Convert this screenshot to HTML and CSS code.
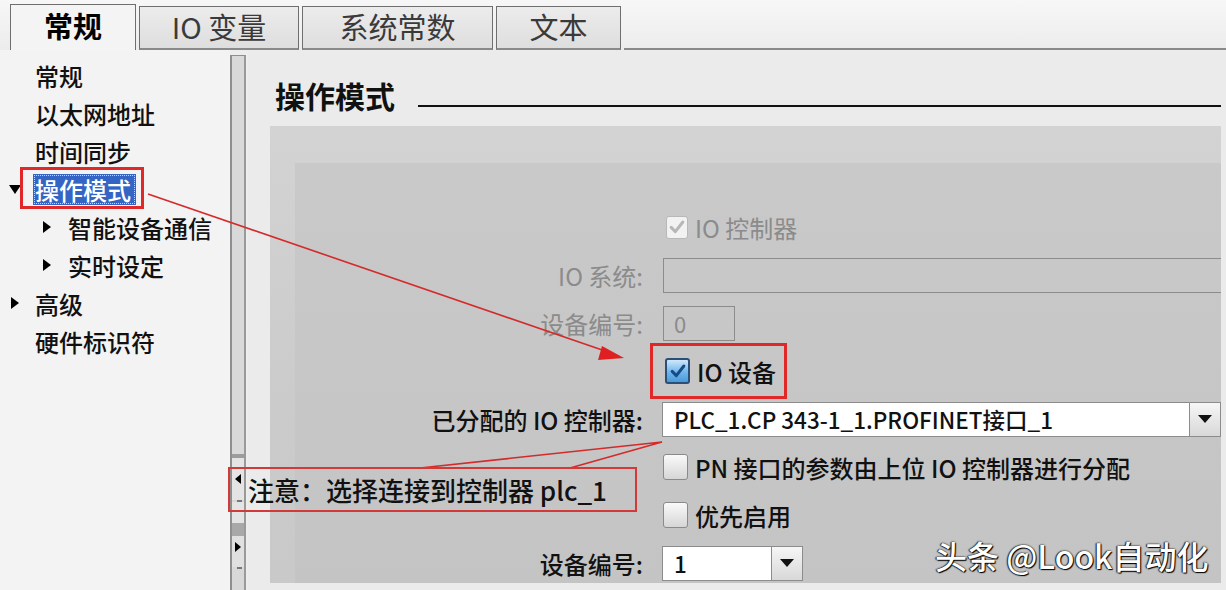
FILE: index.html
```html
<!DOCTYPE html>
<html lang="zh-CN">
<head>
<meta charset="utf-8">
<title>操作模式</title>
<link rel="stylesheet" href="styles.css">
</head>
<body>
<div class="app">
  <div class="tabs">
    <div class="tab active">常规</div>
    <div class="tab">IO 变量</div>
    <div class="tab">系统常数</div>
    <div class="tab">文本</div>
    <div class="tabfill"></div>
  </div>
  <div class="main">
    <nav class="nav">
      <div class="item">常规</div>
      <div class="item">以太网地址</div>
      <div class="item">时间同步</div>
      <div class="item"><span class="tw down"></span><span class="sel">操作模式</span></div>
      <div class="item sub"><span class="tw right"></span>智能设备通信</div>
      <div class="item sub"><span class="tw right"></span>实时设定</div>
      <div class="item"><span class="tw right"></span>高级</div>
      <div class="item">硬件标识符</div>
    </nav>
    <div class="scroll">
      <div class="track"></div>
      <div class="handle">
        <div class="hb"><span class="tri-l"></span></div>
        <div class="hline"></div>
        <div class="hgap"></div>
        <div class="hb dark"><span class="tri-r"></span></div>
        <div class="hline"></div>
      </div>
    </div>
    <section class="content">
      <div class="head">
        <h2>操作模式</h2>
        <div class="rule"></div>
      </div>
      <div class="panel">
        <div class="inner">
          <div class="row">
            <div class="lab"></div>
            <span class="cb dis"><svg viewBox="0 0 24 24"><path d="M5 12.5 L10 17.5 L19 6"/></svg></span>
            <span class="cbl dim">IO 控制器</span>
          </div>
          <div class="row">
            <div class="lab dim">IO 系统:</div>
            <div class="field"></div>
          </div>
          <div class="row">
            <div class="lab dim">设备编号:</div>
            <div class="num">0</div>
          </div>
          <div class="row">
            <div class="lab"></div>
            <span class="hl">
              <span class="cb on"><svg viewBox="0 0 24 24"><path d="M5 12.5 L10 17.5 L19 6"/></svg></span>
              <span class="cbl">IO 设备</span>
            </span>
          </div>
          <div class="row">
            <div class="lab">已分配的 IO 控制器:</div>
            <div class="combo wide">
              <span class="val">PLC_1.CP 343-1_1.PROFINET接口_1</span>
              <span class="btn"><span class="tri-d"></span></span>
            </div>
          </div>
          <div class="row">
            <div class="lab"></div>
            <span class="cb"></span>
            <span class="cbl">PN 接口的参数由上位 IO 控制器进行分配</span>
          </div>
          <div class="row">
            <div class="lab"></div>
            <span class="cb"></span>
            <span class="cbl">优先启用</span>
          </div>
          <div class="row">
            <div class="lab">设备编号:</div>
            <div class="combo small">
              <span class="val">1</span>
              <span class="btn"><span class="tri-d"></span></span>
            </div>
          </div>
        </div>
      </div>
    </section>
  </div>
</div>

<svg class="overlay" width="1226" height="590" viewBox="0 0 1226 590">
  <line x1="148" y1="194" x2="608" y2="352" stroke="#d42a2a" stroke-width="1.6"/>
  <polygon points="624,358 602,346 598,360" fill="#e02020"/>
  <polyline points="420,468 662,442 570,468" fill="none" stroke="#d42a2a" stroke-width="1.6"/>
</svg>
<div class="note">注意：选择连接到控制器 plc_1</div>
<div class="mark">头条 @Look自动化</div>
</body>
</html>
```

FILE: styles.css
```css
html, body {
  margin: 0;
  padding: 0;
}
body {
  width: 1226px;
  height: 590px;
  overflow: hidden;
  position: relative;
  background: #ededed;
  font-family: "Noto Sans CJK SC", "Noto Sans", sans-serif;
  font-weight: 500;
  color: #111;
}
.app {
  display: flex;
  flex-direction: column;
  height: 590px;
}

/* tabs */
.tabs {
  display: flex;
  align-items: flex-end;
  height: 50px;
  box-sizing: border-box;
  padding-left: 10px;
  background: linear-gradient(#f7f7f7, #ececec);
}
.tab {
  height: 44px;
  box-sizing: border-box;
  border: 1px solid #6f6f6f;
  border-bottom: 2px solid #8a8a8a;
  margin-right: 3px;
  background: linear-gradient(#ececec, #dedede);
  font-size: 29px;
  font-weight: 400;
  line-height: 38px;
  color: #3a3a3a;
  text-align: center;
}
.tab:nth-child(1) { width: 126px; }
.tab:nth-child(2) { width: 160px; }
.tab:nth-child(3) { width: 191px; }
.tab:nth-child(4) { width: 125px; }
.tab.active {
  height: 46px;
  background: #f4f4f4;
  border-bottom: none;
  font-weight: bold;
  color: #000;
  line-height: 40px;
}
.tabfill {
  flex: 1;
  height: 2px;
  background: #8a8a8a;
}

/* main */
.main {
  flex: 1;
  display: flex;
  min-height: 0;
}
.nav {
  width: 230px;
  box-sizing: border-box;
  padding-top: 6px;
  background: #f3f3f3;
}
.item {
  height: 38px;
  display: flex;
  align-items: center;
  padding-left: 35px;
  font-size: 24px;
  color: #111;
}
.item.sub {
  padding-left: 68px;
}
.tw {
  width: 25px;
  margin-left: -25px;
  display: flex;
  align-items: center;
  justify-content: flex-start;
}
.item .tw.down { margin-left: -35px; width: 35px; }
.item:not(.sub) .tw.right { margin-left: -24px; width: 24px; }
.tw.right::before {
  content: "";
  border-left: 8px solid #000;
  border-top: 6px solid transparent;
  border-bottom: 6px solid transparent;
}
.tw.down::before {
  content: "";
  margin-left: 9px;
  border-top: 9px solid #000;
  border-left: 6px solid transparent;
  border-right: 6px solid transparent;
}
.sel {
  position: relative;
  background: #3465c4;
  color: #fff;
  padding: 0 5px 0 2px;
  margin-left: -2px;
  height: 31px;
  line-height: 31px;
  outline: 1px dotted #c8d4f0;
  outline-offset: -2px;
}
.sel::after {
  content: "";
  position: absolute;
  left: -13px;
  right: -8px;
  top: -7px;
  bottom: -4px;
  border: 3px solid #e02828;
}

/* scrollbar / splitter */
.scroll {
  width: 16px;
  margin-top: 5px;
  margin-right: 2px;
  box-sizing: border-box;
  border-left: 2px solid #8e8e8e;
  border-right: 2px solid #9a9a9a;
  border-top: 1px solid #8e8e8e;
  background: #d8d8d8;
  display: flex;
  flex-direction: column;
}
.track {
  flex: 1;
  background: #d9d9d9;
}
.handle {
  height: 132px;
  display: flex;
  flex-direction: column;
  border-top: 4px solid #9c9c9c;
}
.hb {
  height: 42px;
  display: flex;
  align-items: center;
  justify-content: center;
  background: #e4e4e4;
}
.hgap {
  height: 21px;
  background: #e4e4e4;
}
.hb.dark {
  background: linear-gradient(#a8a8a8 0 13px, #e0e0e0 13px);
  height: 44px;
}
.hline {
  height: 2px;
  background: #777;
  margin: 0 2px 0 5px;
}
.tri-l {
  border-right: 6px solid #000;
  border-top: 5px solid transparent;
  border-bottom: 5px solid transparent;
}
.tri-r {
  border-left: 6px solid #000;
  border-top: 5px solid transparent;
  border-bottom: 5px solid transparent;
  margin-top: 4px;
}

/* content */
.content {
  flex: 1;
  display: flex;
  flex-direction: column;
  padding: 0 5px 7px 22px;
  background: #ebebeb;
  min-width: 0;
}
.head {
  height: 76px;
  box-sizing: border-box;
  padding: 14px 0 0 5px;
  display: flex;
  align-items: center;
  flex-shrink: 0;
}
.head h2 {
  margin: 0;
  font-size: 30px;
  font-weight: bold;
  color: #111;
  line-height: 40px;
}
.rule {
  flex: 1;
  height: 2px;
  background: #111;
  margin: 22px 0 0 23px;
}
.panel {
  flex: 1;
  min-height: 0;
  overflow: hidden;
  display: flex;
  flex-direction: column;
  padding: 37px 0 0 25px;
  background: linear-gradient(#d3d3d3, #cbcbcb 60%, #c9c9c9);
}
.inner {
  flex: 1;
  padding-top: 40px;
  background: linear-gradient(#c9c9ca, #c4c4c5);
  display: flex;
  flex-direction: column;
}
.row {
  height: 48px;
  flex-shrink: 0;
  display: flex;
  align-items: center;
  font-size: 24px;
}
.lab {
  width: 348px;
  margin-right: 20px;
  text-align: right;
  white-space: nowrap;
  color: #111;
}
.dim { color: #8b8b8b; font-weight: 400; }

.cb {
  width: 25px;
  height: 26px;
  box-sizing: border-box;
  border: 1px solid #8a8a8a;
  border-radius: 3px;
  background: linear-gradient(#fafafa, #d6d6d6);
  display: flex;
  align-items: center;
  justify-content: center;
  flex-shrink: 0;
}
.cb svg {
  width: 20px;
  height: 20px;
  fill: none;
  stroke-width: 3.6;
  stroke-linecap: round;
  stroke-linejoin: round;
}
.cb.dis {
  width: 22px;
  height: 23px;
  margin-left: 3px;
  border-color: #b8b8b8;
  background: #f2f2f2;
}
.cb.dis svg { stroke: #b7b7b7; }
.cb.on {
  border: 2px solid #2c4f78;
  background: linear-gradient(#cfe8fb, #6fb6ea 55%, #4a9ad8);
  margin-left: 2px;
}
.cb.on svg { stroke: #174a86; }
.cbl {
  margin-left: 7px;
  white-space: nowrap;
}
.hl {
  position: relative;
  display: flex;
  align-items: center;
}
.hl::after {
  content: "";
  position: absolute;
  left: -13px;
  right: -11px;
  top: -11px;
  bottom: -10px;
  border: 3px solid #e02828;
}

.field {
  flex: 1;
  height: 35px;
  box-sizing: border-box;
  border: 1px solid #8c8c8c;
  border-right: none;
}
.num {
  width: 72px;
  height: 35px;
  box-sizing: border-box;
  border: 1px solid #8c8c8c;
  color: #8b8b8b;
  font-weight: 400;
  padding-left: 10px;
  line-height: 33px;
  font-size: 22px;
}
.combo {
  height: 35px;
  box-sizing: border-box;
  border: 1px solid #8c8c8c;
  background: #fff;
  display: flex;
  margin-left: -1px;
}
.combo.wide { flex: 1; }
.combo.small { width: 141px; }
.combo .val {
  flex: 1;
  padding-left: 11px;
  line-height: 33px;
  font-size: 22.5px;
  color: #111;
  white-space: nowrap;
}
.combo .btn {
  width: 30px;
  border-left: 1px solid #8c8c8c;
  background: linear-gradient(#f6f6f6, #d8d8d8);
  display: flex;
  align-items: center;
  justify-content: center;
}
.tri-d {
  border-top: 8px solid #111;
  border-left: 7px solid transparent;
  border-right: 7px solid transparent;
}

/* annotations */
.overlay {
  position: absolute;
  left: 0;
  top: 0;
  pointer-events: none;
}
.note {
  position: absolute;
  left: 228px;
  top: 467px;
  width: 409px;
  height: 45px;
  box-sizing: border-box;
  border: 2px solid #d23a3a;
  padding-left: 18px;
  font-size: 26px;
  line-height: 41px;
  color: #111;
  white-space: nowrap;
}
.mark {
  position: absolute;
  left: 935px;
  top: 533px;
  font-size: 32px;
  line-height: 44px;
  color: #fff;
  white-space: nowrap;
  text-shadow: 0 0 2px #000, 1px 1px 1px #000, -1px 0 1px #333;
}
```
